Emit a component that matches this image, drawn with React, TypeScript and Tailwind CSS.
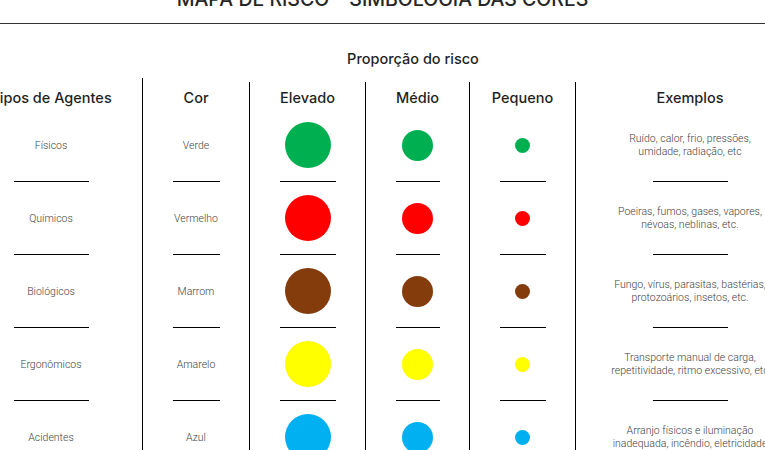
import React from "react";

type Row = { name: string; cor: string; color: string; ex: [string, string] };

const rows: Row[] = [
  { name: "Físicos", cor: "Verde", color: "#00b050", ex: ["Ruído, calor, frio, pressões,", "umidade, radiação, etc"] },
  { name: "Químicos", cor: "Vermelho", color: "#ff0000", ex: ["Poeiras, fumos, gases, vapores,", "névoas, neblinas, etc."] },
  { name: "Biológicos", cor: "Marrom", color: "#843c0c", ex: ["Fungo, vírus, parasitas, bastérias,", "protozoários, insetos, etc."] },
  { name: "Ergonômicos", cor: "Amarelo", color: "#ffff00", ex: ["Transporte manual de carga,", "repetitividade, ritmo excessivo, etc"] },
  { name: "Acidentes", cor: "Azul", color: "#00b0f0", ex: ["Arranjo físicos e iluminação", "inadequada, incêndio, eletricidade"] },
];

const head = "font-['Inter',sans-serif] font-medium text-[14.5px] text-[#1f1f1f] leading-[20px]";
const body = "font-['Roboto',sans-serif] font-light text-[10.5px] leading-[13px] text-[#3f3f3f] text-center";

function Cell({ children, line }: { children: React.ReactNode; line: string }) {
  return (
    <div className="h-[73px] flex flex-col items-center">
      <div className="h-[72px] flex items-center justify-center">{children}</div>
      <div className={`h-px bg-black ${line}`} />
    </div>
  );
}

function Dot({ size, color }: { size: string; color: string }) {
  return <div className={`${size} rounded-full`} style={{ backgroundColor: color }} />;
}

export default function App() {
  return (
    <div className="w-[765px] h-[450px] overflow-hidden bg-white">
      <div className="-mt-[13px] h-[37px] border-b border-[#333] flex justify-center">
        <div className="font-['Inter',sans-serif] font-medium text-[19.5px] leading-[24px] text-[#262626]">
          MAPA DE RISCO – SIMBOLOGIA DAS CORES
        </div>
      </div>
      <div className="w-[844px] -ml-[40px]">
        <div className="flex">
          <div className="w-[290px]" />
          <div className="w-[326px] h-[54px] flex items-center justify-center pt-[16px]">
            <span className={head}>Proporção do risco</span>
          </div>
        </div>
        <div className="flex items-start">
          <div className="w-[183px] border-r border-black">
            <div className="h-[31px] flex justify-center pt-[10px]">
              <span className={head}>Tipos de Agentes</span>
            </div>
            {rows.map((r) => (
              <Cell key={r.name} line="w-[75px]">
                <span className={body}>{r.name}</span>
              </Cell>
            ))}
          </div>
          <div className="w-[107px] mt-[4px] border-r border-black">
            <div className="h-[27px] flex justify-center pt-[6px]">
              <span className={head}>Cor</span>
            </div>
            {rows.map((r) => (
              <Cell key={r.name} line="w-[47px]">
                <span className={body}>{r.cor}</span>
              </Cell>
            ))}
          </div>
          <div className="w-[116px] mt-[4px] border-r border-black">
            <div className="h-[27px] flex justify-center pt-[6px]">
              <span className={head}>Elevado</span>
            </div>
            {rows.map((r) => (
              <Cell key={r.name} line="w-[56px]">
                <Dot size="w-[46px] h-[46px]" color={r.color} />
              </Cell>
            ))}
          </div>
          <div className="w-[104px] mt-[4px] border-r border-black">
            <div className="h-[27px] flex justify-center pt-[6px]">
              <span className={head}>Médio</span>
            </div>
            {rows.map((r) => (
              <Cell key={r.name} line="w-[44px]">
                <Dot size="w-[31px] h-[31px]" color={r.color} />
              </Cell>
            ))}
          </div>
          <div className="w-[106px] mt-[4px] border-r border-black">
            <div className="h-[27px] flex justify-center pt-[6px]">
              <span className={head}>Pequeno</span>
            </div>
            {rows.map((r) => (
              <Cell key={r.name} line="w-[46px]">
                <Dot size="w-[15px] h-[15px]" color={r.color} />
              </Cell>
            ))}
          </div>
          <div className="w-[228px] mt-[4px]">
            <div className="h-[27px] flex justify-center pt-[6px]">
              <span className={head}>Exemplos</span>
            </div>
            {rows.map((r) => (
              <Cell key={r.name} line="w-[75px]">
                <div className={`${body} whitespace-nowrap`}>
                  {r.ex[0]}
                  <br />
                  {r.ex[1]}
                </div>
              </Cell>
            ))}
          </div>
        </div>
      </div>
    </div>
  );
}
